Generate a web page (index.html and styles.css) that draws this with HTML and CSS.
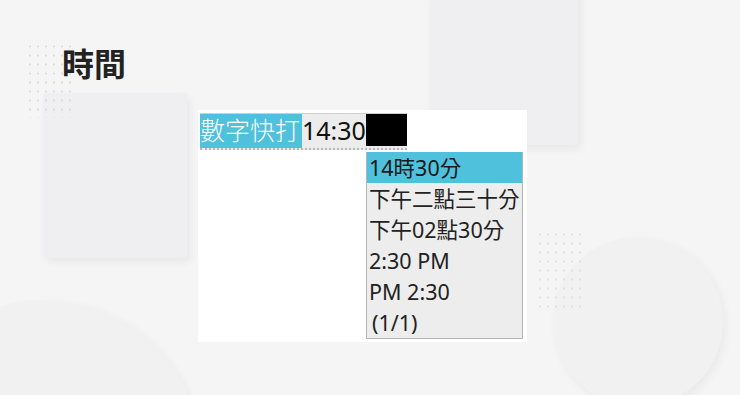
FILE: index.html
```html
<!DOCTYPE html>
<html lang="zh-Hant">
<head>
    <meta charset="UTF-8">
    <meta name="viewport" content="width=device-width, initial-scale=1.0">
    <title>時間</title>
    <link rel="stylesheet" href="styles.css">
</head>
<body>
    <div class="deco">
        <div class="sq sq-top"></div>
        <div class="sq sq-left"></div>
        <div class="circle c-left"></div>
        <div class="circle c-right"></div>
        <div class="dots dots-left"></div>
        <div class="dots dots-right"></div>
    </div>

    <main class="page">
        <h1 class="title">時間</h1>

        <div class="panel">
            <div class="ime-input">
                <span class="composing">數字快打</span><span class="typed">14:30</span><span class="cursor"></span>
            </div>
            <ul class="candidates">
                <li class="active">14時30分</li>
                <li>下午二點三十分</li>
                <li>下午02點30分</li>
                <li>2:30 PM</li>
                <li>PM 2:30</li>
                <li class="page-info">(1/1)</li>
            </ul>
        </div>
    </main>
</body>
</html>
```

FILE: styles.css
```css
html, body {
    margin: 0;
    height: 100%;
    overflow: hidden;
}

body {
    background: #f5f5f6;
    font-family: "Noto Sans", "Noto Sans CJK TC", sans-serif;
    color: #222;
    position: relative;
}

/* decorative background shapes */
.deco {
    position: absolute;
    inset: 0;
    overflow: hidden;
}

.deco .sq,
.deco .circle,
.deco .dots {
    position: absolute;
}

.sq {
    background: #efeff1;
    border-radius: 4px;
    box-shadow: 3px 4px 8px rgba(0, 0, 0, 0.06);
}

.sq-top {
    left: 430px;
    top: -10px;
    width: 148px;
    height: 155px;
}

.sq-left {
    left: 43px;
    top: 93px;
    width: 144px;
    height: 165px;
}

.circle {
    border-radius: 50%;
    background: #f1f1f2;
    box-shadow: 3px 4px 10px rgba(0, 0, 0, 0.05);
}

.c-left {
    left: -110px;
    top: 300px;
    width: 310px;
    height: 310px;
}

.c-right {
    left: 553px;
    top: 237px;
    width: 170px;
    height: 170px;
}

.dots {
    width: 48px;
    height: 76px;
    background-image: radial-gradient(#dcdcde 0.8px, transparent 1.2px);
    background-size: 8px 9px;
}

.dots-left {
    left: 26px;
    top: 42px;
}

.dots-right {
    left: 536px;
    top: 230px;
    height: 80px;
    opacity: 0.8;
}

/* content */
.page {
    position: relative;
    padding: 43px 0 0 198px;
}

.title {
    margin: 0 0 28px -136px;
    font-family: "Noto Sans CJK TC", sans-serif;
    font-size: 32px;
    line-height: 39px;
    font-weight: 700;
    color: #222;
}

.panel {
    width: 329px;
    height: 232px;
    background: #fff;
    box-sizing: border-box;
    padding: 3px 0 0 2px;
}

.ime-input {
    display: flex;
    width: 207px;
    height: 37px;
    box-sizing: border-box;
    background: #ececec;
    border-top: 1px solid #cfcfcf;
    border-bottom: 2px dotted #b9b9b9;
    font-size: 25px;
    line-height: 32px;
    white-space: nowrap;
}

.composing {
    background: #4fc1dc;
    color: #fff;
    font-weight: 300;
    padding-right: 2px;
}

.typed {
    color: #111;
}

.cursor {
    flex: 1;
    height: 32px;
    background: #000;
}

.candidates {
    list-style: none;
    margin: 2px 0 0 166px;
    padding: 0;
    width: 157px;
    box-sizing: border-box;
    background: #ededed;
    border: 1px solid #b5b5b5;
    border-top: none;
    font-size: 21.5px;
}

.candidates li {
    height: 31px;
    line-height: 31px;
    padding-left: 2px;
    color: #222;
    white-space: nowrap;
}

.candidates li.active {
    background: #4fc1dc;
    color: #1a1a1a;
}

.candidates li.page-info {
    padding-left: 5px;
}
```
